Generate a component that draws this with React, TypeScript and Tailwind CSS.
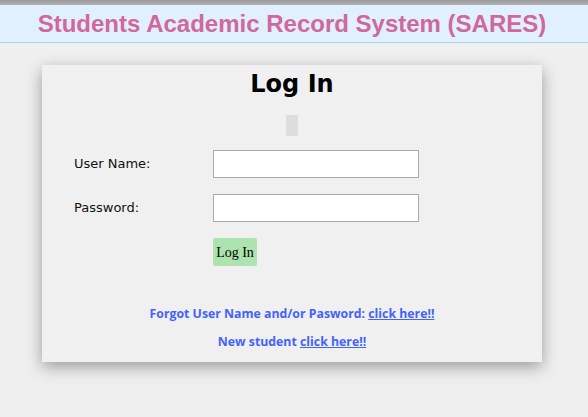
import React from "react";

export default function App() {
  return (
    <div className="w-[588px] h-[417px] bg-[#efefef] overflow-hidden">
      <div className="w-[584px] flex flex-col">
        <div className="h-[5px] bg-gradient-to-b from-[#9a9a9a] to-[#b0b0b0] w-[588px]" />
        <div className="h-[38px] w-[588px] bg-[#e1f0ff] border-b border-[#a8d8ec] flex items-center">
          <div className="w-[584px] flex justify-center">
            <h1
              className="text-[24px] font-bold text-[#d0689b] leading-none"
              style={{ fontFamily: '"Liberation Sans", Arial, sans-serif' }}
            >
              Students Academic Record System (SARES)
            </h1>
          </div>
        </div>
        <div className="flex justify-center pt-[22px]">
          <div
            className="w-[500px] h-[297px] bg-[#f0f0f0] shadow-[0_5px_15px_rgba(0,0,0,0.35)] flex flex-col items-center"
            style={{ fontFamily: '"DejaVu Sans", Verdana, sans-serif' }}
          >
            <h2 className="text-[24px] font-bold text-black leading-none mt-[7px]">Log In</h2>
            <div className="w-[12px] h-[21px] bg-[#dddddd] mt-[19px]" />
            <div className="w-full pl-[32px] mt-[14px] flex flex-col gap-[16px]">
              <div className="flex items-center">
                <label className="w-[139px] text-[13px] text-[#111]">User Name:</label>
                <input className="w-[206px] h-[28px] bg-white border border-[#aaaaaa]" />
              </div>
              <div className="flex items-center">
                <label className="w-[139px] text-[13px] text-[#111]">Password:</label>
                <input type="password" className="w-[206px] h-[28px] bg-white border border-[#aaaaaa]" />
              </div>
              <div className="flex">
                <div className="w-[139px]" />
                <button
                  className="w-[44px] h-[28px] bg-[#ade3ae] rounded-[2px] text-[14px] text-black"
                  style={{ fontFamily: '"Liberation Serif", "Times New Roman", serif' }}
                >
                  Log In
                </button>
              </div>
            </div>
            <div
              className="mt-[39px] flex flex-col items-center gap-[10px] text-[12.3px] font-bold text-[#4462ff] leading-[18px]"
              style={{ fontFamily: '"Open Sans", sans-serif' }}
            >
              <p>
                Forgot User Name and/or Pasword: <a href="#" className="underline">click here!!</a>
              </p>
              <p>
                New student <a href="#" className="underline">click here!!</a>
              </p>
            </div>
          </div>
        </div>
      </div>
    </div>
  );
}
